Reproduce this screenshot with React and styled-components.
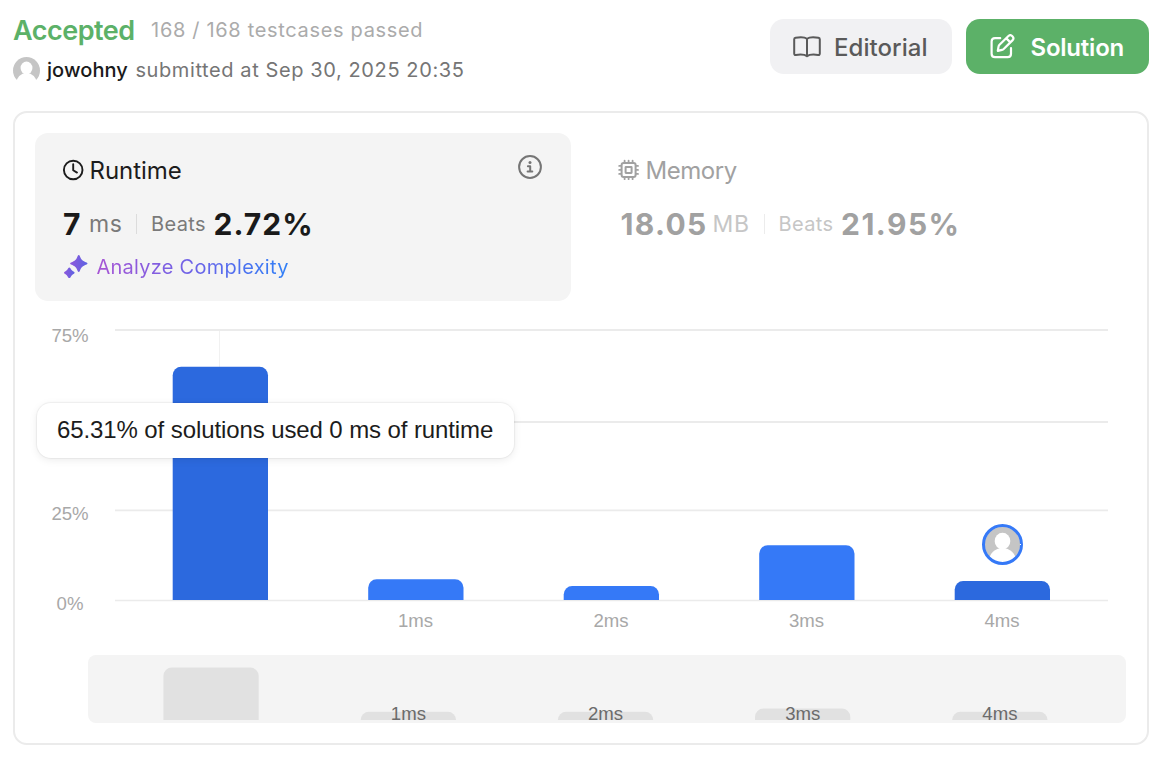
import React from 'react';
import styled, { createGlobalStyle } from 'styled-components';

const GlobalStyle = createGlobalStyle`
  * { box-sizing: border-box; }
  body { margin: 0; background: #fff; font-family: Inter, "Liberation Sans", sans-serif; }
`;

const Page = styled.main`
  width: 1160px;
  height: 768px;
  padding: 13px 11px 23px 13px;
  display: flex;
  flex-direction: column;
  overflow: hidden;
`;

const Header = styled.header`
  display: flex;
  justify-content: space-between;
  height: 98px;
  flex: none;
`;

const Summary = styled.div`
  display: flex;
  flex-direction: column;
  gap: 9px;
`;

const StatusRow = styled.div`
  display: flex;
  align-items: center;
  gap: 16.5px;
  height: 34px;
`;

const AuthorRow = styled.div`
  display: flex;
  align-items: center;
  height: 28px;
`;

const Label = styled.span`
  font-size: ${(p) => p.$size || 20}px;
  font-weight: ${(p) => p.$weight || 400};
  letter-spacing: ${(p) => p.$spacing || 0}px;
  color: ${(p) => p.$color};
  white-space: nowrap;
`;

const AuthorName = styled(Label)`
  margin: 0 7.5px 0 7px;
`;

const Actions = styled.div`
  display: flex;
  gap: 14px;
  padding-top: 6px;
`;

const Button = styled.button`
  display: flex;
  align-items: center;
  width: ${(p) => p.$width}px;
  height: 55px;
  padding: 2px 0 0 ${(p) => p.$inset}px;
  gap: ${(p) => p.$gap}px;
  border: 0;
  border-radius: 14px;
  background: ${(p) => (p.$primary ? '#5cb168' : '#f1f1f3')};
  color: ${(p) => (p.$primary ? '#fff' : '#5a5a5a')};
  font: ${(p) => (p.$primary ? 600 : 500)} 24px Inter, "Liberation Sans", sans-serif;
  letter-spacing: ${(p) => (p.$primary ? -0.22 : 0.05)}px;
  svg { flex: none; margin-bottom: 2px; }
`;

const Card = styled.section`
  height: 634px;
  border: 2px solid #ebebeb;
  border-radius: 14px;
  padding: 20px;
  display: flex;
  flex-direction: column;
`;

const Metrics = styled.div`
  display: flex;
  gap: 20px;
`;

const Metric = styled.div`
  display: flex;
  flex-direction: column;
  width: 536px;
  height: 168px;
  padding: 22px 29px 0 27px;
  border-radius: 13px;
  background: ${(p) => (p.$active ? '#f4f4f4' : 'transparent')};
`;

const MetricHead = styled.div`
  display: flex;
  align-items: center;
  justify-content: space-between;
  height: 30px;
`;

const MetricTitle = styled.div`
  display: flex;
  align-items: center;
  gap: 5.5px;
`;

const InfoSlot = styled.div`
  display: flex;
  height: 30px;
`;

const MetricValues = styled.div`
  display: flex;
  align-items: center;
  height: 40px;
  margin-top: 19px;
  padding-left: ${(p) => p.$inset}px;
`;

const Unit = styled(Label)`
  margin-left: ${(p) => p.$gap}px;
`;

const Divider = styled.i`
  width: 1px;
  height: 20px;
  margin: 0 13.8px 0 13.7px;
  background: ${(p) => p.$color};
`;

const Percent = styled(Label)`
  margin-left: 7.5px;
`;

const Analyze = styled.div`
  display: flex;
  align-items: center;
  gap: 8.4px;
  height: 30px;
  margin-top: 8px;
`;

const GradientText = styled.span`
  font-size: 20px;
  letter-spacing: 0.27px;
  color: transparent;
  background: linear-gradient(90deg, #a855d4 0%, #6a63e8 52%, #2f80f7 100%);
  background-clip: text;
  -webkit-background-clip: text;
`;

const ChartArea = styled.div`
  position: relative;
  height: 424px;
  width: 1092px;
`;

const ChartSvg = styled.svg`
  display: block;
  font-family: "Liberation Sans", Arial, sans-serif;
  font-size: 18.6px;
`;

const Tooltip = styled.div`
  position: absolute;
  left: 2px;
  top: 102px;
  width: 477px;
  height: 55px;
  display: flex;
  align-items: center;
  padding: 0 0 2px 20px;
  border-radius: 14px;
  background: #fff;
  box-shadow: 0 0 1px 1px rgba(0, 0, 0, 0.05), 0 2px 8px rgba(0, 0, 0, 0.08);
  font: 24px "Liberation Sans", Arial, sans-serif;
  letter-spacing: -0.1px;
  color: #1c1c1c;
  white-space: nowrap;
`;

const Silhouette = ({ cx, cy, r, id }) => (
  <g>
    <clipPath id={id}><circle cx={cx} cy={cy} r={r + 1} /></clipPath>
    <circle cx={cx} cy={cy} r={r} fill="#c5c5c5" />
    <g clipPath={`url(#${id})`} fill="#fff">
      <ellipse cx={cx} cy={cy - r * 0.19} rx={r * 0.44} ry={r * 0.47} />
      <ellipse cx={cx} cy={cy + r * 0.95} rx={r * 0.76} ry={r * 0.76} />
    </g>
  </g>
);

const BookIcon = () => (
  <svg width="28" height="22" viewBox="0 0 28 22" fill="none" stroke="currentColor" strokeWidth="2" strokeLinejoin="round" strokeLinecap="round">
    <path d="M14 2.7C12 1.2 7 1 2.6 1.7Q1.2 1.9 1.2 3.2V17.5Q1.2 19.1 2.8 18.9C7 18.3 12 18.6 14 20.1C16 18.6 21 18.3 25.2 18.9Q26.8 19.1 26.8 17.5V3.2Q26.8 1.9 25.4 1.7C21 1 16 1.2 14 2.7ZM14 2.7V19.8" />
  </svg>
);

const PencilIcon = () => (
  <svg width="25" height="25" viewBox="0 0 25 25" fill="none" stroke="currentColor" strokeWidth="2.2" strokeLinejoin="round" strokeLinecap="round">
    <path d="M10.2 4.2H5Q1.6 4.2 1.6 7.6V19.8Q1.6 23.2 5 23.2H17.6Q21 23.2 21 19.8V14.2" />
    <path d="M7.8 16.8L8.6 12.4Q8.8 11.4 9.5 10.7L18.2 2.2A2.9 2.9 0 0 1 22.4 6.4L13.7 15Q13 15.7 12 15.9ZM16.6 4.6L20.1 8.1" />
  </svg>
);

const ClockIcon = () => (
  <svg width="22" height="22" viewBox="0 0 22 22" fill="none" stroke="#1c1c1c" strokeWidth="1.9" strokeLinecap="round" strokeLinejoin="round">
    <circle cx="11.2" cy="11" r="9.3" />
    <path d="M11.2 5.3V11.2L15 13.6" />
  </svg>
);

const ChipIcon = () => (
  <svg width="22" height="22" viewBox="0 0 22 22" fill="none" stroke="#a1a1a1" strokeWidth="1.8" strokeLinecap="round" strokeLinejoin="round">
    <rect x="3.6" y="3.9" width="14" height="14" rx="2" strokeWidth="2" />
    <rect x="7.6" y="7.9" width="6" height="6" rx=".4" strokeWidth="2" />
    <path d="M6.6 1.6V3.5M10.6 1.6V3.5M14.6 1.6V3.5M6.6 18.3V20.2M10.6 18.3V20.2M14.6 18.3V20.2M1.2 6.9H3.2M1.2 10.9H3.2M1.2 14.9H3.2M18 6.9H20M18 10.9H20M18 14.9H20" />
  </svg>
);

const InfoIcon = () => (
  <svg width="24" height="24" viewBox="0 0 24 24" fill="none" stroke="#757575" strokeWidth="2" strokeLinecap="round" strokeLinejoin="round">
    <circle cx="12" cy="12" r="10.9" />
    <circle cx="12" cy="7.5" r="1.5" fill="#757575" stroke="none" />
    <path d="M9.9 11.3H12.2V16.5M9.6 16.6H14.3" />
  </svg>
);

const SparkleIcon = () => (
  <svg width="26" height="26" viewBox="0 0 26 26">
    <defs>
      <linearGradient id="sparkle" x1="0" y1="0" x2="1" y2="0">
        <stop offset="0" stopColor="#8f58dc" />
        <stop offset="1" stopColor="#5c62e2" />
      </linearGradient>
    </defs>
    <g fill="url(#sparkle)">
      <path d="M16.7 1Q17.4 1 17.7 1.8C19.1 5.6 20.5 7 24.6 8.6Q25.5 9 25.5 9.6Q25.5 10.2 24.6 10.5C20.5 12 19.1 13.4 17.7 17.3Q17.4 18.1 16.7 18.1Q16.1 18.1 15.8 17.3C14.4 13.4 13 12 9 10.5Q8.1 10.2 8.1 9.6Q8.1 9 9 8.6C13 7 14.4 5.6 15.8 1.8Q16.1 1 16.7 1Z" />
      <path d="M7.3 13.5Q7.9 13.5 8.4 14.2C9.5 16.1 10 16.6 11.9 17.8Q12.6 18.2 12.6 18.8Q12.6 19.4 11.9 19.8C10 21 9.5 21.5 8.4 23.4Q7.9 24.1 7.3 24.1Q6.7 24.1 6.2 23.4C5.1 21.5 4.6 21 2.7 19.8Q2 19.4 2 18.8Q2 18.2 2.7 17.8C4.6 16.6 5.1 16.1 6.2 14.2Q6.7 13.5 7.3 13.5Z" />
    </g>
  </svg>
);

const BARS = [
  { x: 172.7, top: 366.7, miniX: 163.4, miniTop: 667.6, dark: true },
  { x: 368.2, top: 579.2, miniX: 360.7, miniTop: 711.8, label: '1ms' },
  { x: 563.7, top: 586, miniX: 557.9, miniTop: 711.8, label: '2ms' },
  { x: 759.2, top: 545.2, miniX: 755, miniTop: 708.5, label: '3ms' },
  { x: 954.7, top: 581, miniX: 952.2, miniTop: 711.8, label: '4ms', dark: true },
];
const BAR_WIDTH = 95.3;
const GRID = [
  { y: 330, w: 1.8 },
  { y: 422, w: 1.8 },
  { y: 510.4, w: 1.6 },
  { y: 600.5, w: 1.6 },
];
const TICKS = [['75%', 342], ['25%', 520], ['0%', 610]];

const barPath = (x, top, bottom) => {
  const r = Math.min(8.5, bottom - top);
  return `M${x} ${bottom}V${top + r}a${r} ${r} 0 0 1 ${r} ${-r}H${x + BAR_WIDTH - r}a${r} ${r} 0 0 1 ${r} ${r}V${bottom}Z`;
};

const Chart = () => (
  <ChartSvg width="1092" height="424" viewBox="35 301 1092 424">
    {GRID.map((g) => (
      <line key={g.y} x1="115" x2="1108" y1={g.y} y2={g.y} stroke="#ebebeb" strokeWidth={g.w} />
    ))}
    <line x1="219.5" x2="219.5" y1="331" y2="367" stroke="#f1f1f1" />
    {TICKS.map(([t, y]) => (
      <text key={t} x="70" y={y} textAnchor="middle" fill="#a8a8a8">{t}</text>
    ))}
    {BARS.map((b) => (
      <g key={b.x}>
        <path d={barPath(b.x, b.top, 600)} fill={b.dark ? '#2c69de' : '#3579f7'} />
        {b.label && (
          <text x={b.x + 47.4} y="627" textAnchor="middle" fill="#a8a8a8">{b.label}</text>
        )}
      </g>
    ))}
    <Silhouette cx={1002.5} cy={544.5} r={17.8} id="marker" />
    <circle cx="1002.5" cy="544.5" r="19" fill="none" stroke="#3579f7" strokeWidth="3" />
    <rect x="1020" y="544" width="1" height="1" fill="#fff" />
    <rect x="88" y="655" width="1038" height="68" rx="8" fill="#f4f4f4" />
    {BARS.map((b) => (
      <g key={b.miniX}>
        <path d={barPath(b.miniX, b.miniTop, 720)} fill="#e1e1e1" />
        {b.label && (
          <text x={b.miniX + 47.7} y="720" textAnchor="middle" fill="#6b6b6b">{b.label}</text>
        )}
      </g>
    ))}
  </ChartSvg>
);

export default function App() {
  return (
    <Page>
      <GlobalStyle />
      <Header>
        <Summary>
          <StatusRow>
            <Label $size={27} $weight={600} $spacing={-0.5} $color="#5cb168">Accepted</Label>
            <Label $spacing={0.67} $color="#ababab">168 / 168 testcases passed</Label>
          </StatusRow>
          <AuthorRow>
            <svg width="27" height="27" viewBox="0 0 27 27">
              <Silhouette cx={13.5} cy={13.5} r={13.5} id="author" />
            </svg>
            <AuthorName $weight={500} $spacing={0.08} $color="#1a1a1a">jowohny</AuthorName>
            <Label $spacing={0.6} $color="#757575">submitted at Sep 30, 2025 20:35</Label>
          </AuthorRow>
        </Summary>
        <Actions>
          <Button $width={182} $inset={23} $gap={13}><BookIcon />Editorial</Button>
          <Button $primary $width={183} $inset={24} $gap={15.5}><PencilIcon />Solution</Button>
        </Actions>
      </Header>
      <Card>
        <Metrics>
          <Metric $active>
            <MetricHead>
              <MetricTitle><ClockIcon /><Label $size={24} $spacing={-0.05} $color="#1c1c1c">Runtime</Label></MetricTitle>
              <InfoSlot><InfoIcon /></InfoSlot>
            </MetricHead>
            <MetricValues $inset={1}>
              <Label $size={30} $weight={700} $color="#1a1a1a">7</Label>
              <Unit $gap={8.5} $size={23} $spacing={0.6} $color="#7a7a7a">ms</Unit>
              <Divider $color="#dcdcdc" />
              <Label $spacing={0.4} $color="#7a7a7a">Beats</Label>
              <Percent $size={30} $weight={700} $spacing={1.08} $color="#1a1a1a">2.72%</Percent>
            </MetricValues>
            <Analyze><SparkleIcon /><GradientText>Analyze Complexity</GradientText></Analyze>
          </Metric>
          <Metric>
            <MetricHead>
              <MetricTitle><ChipIcon /><Label $size={24} $spacing={-0.45} $color="#a1a1a1">Memory</Label></MetricTitle>
            </MetricHead>
            <MetricValues $inset={2.5}>
              <Label $size={30} $weight={700} $spacing={1.32} $color="#a1a1a1">18.05</Label>
              <Unit $gap={5} $size={23} $spacing={0.8} $color="#c6c6c6">MB</Unit>
              <Divider $color="#ececec" />
              <Label $spacing={0.4} $color="#c6c6c6">Beats</Label>
              <Percent $size={30} $weight={700} $spacing={1.5} $color="#a1a1a1">21.95%</Percent>
            </MetricValues>
          </Metric>
        </Metrics>
        <ChartArea>
          <Chart />
          <Tooltip>65.31% of solutions used 0 ms of runtime</Tooltip>
        </ChartArea>
      </Card>
    </Page>
  );
}
